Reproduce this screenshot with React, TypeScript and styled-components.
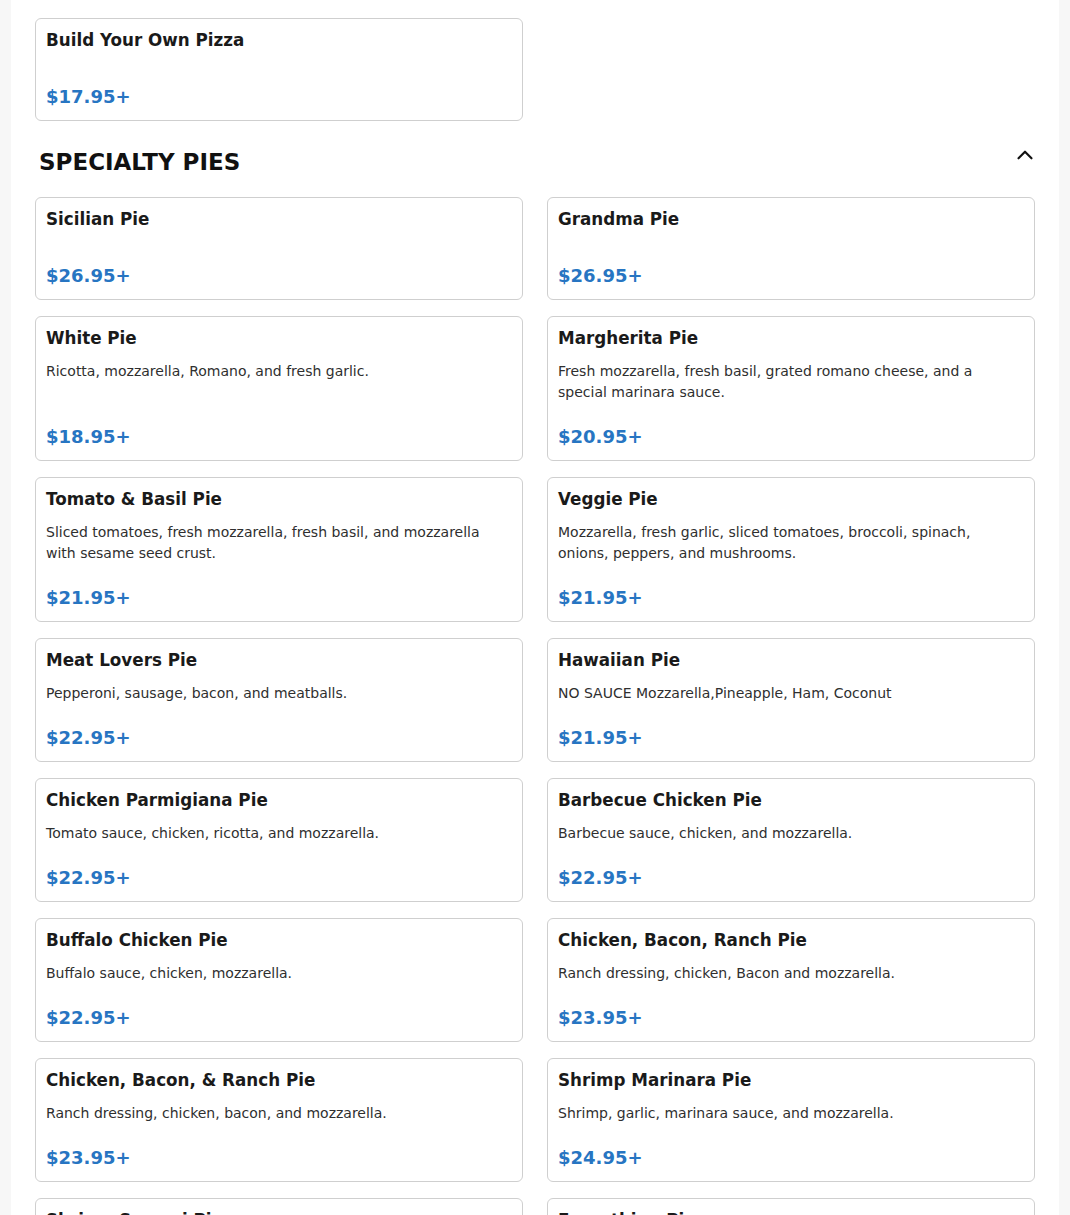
import React, { useState } from 'react';
import styled, { createGlobalStyle } from 'styled-components';
import { ChevronUp } from 'lucide-react';

type Pie = { name: string; description: string; price: string };

const GlobalStyle = createGlobalStyle`
  body {
    margin: 0;
    background: #f7f7f7;
    font-family: "DejaVu Sans", Verdana, sans-serif;
    color: #1d1d1d;
  }
`;

const Page = styled.main`
  max-width: 1048px;
  margin: 0 auto;
  background: #ffffff;
  padding: 18px 24px 40px;
  box-sizing: border-box;
  min-height: 1400px;
`;

const Grid = styled.div`
  display: grid;
  grid-template-columns: 1fr 1fr;
  column-gap: 24px;
  row-gap: 16px;
`;

const SectionHeader = styled.button`
  display: flex;
  justify-content: space-between;
  align-items: flex-start;
  width: 100%;
  margin: 24px 0 18px;
  padding: 0 0 0 4px;
  border: none;
  background: none;
  cursor: pointer;
  font-family: inherit;
  text-align: left;

  svg {
    margin-top: -3px;
    margin-right: -3px;
    color: #111;
  }
`;

const SectionTitle = styled.h2`
  margin: 0;
  font-size: 23px;
  line-height: 34px;
  font-weight: 700;
  color: #111;
`;

const Card = styled.div`
  display: flex;
  flex-direction: column;
  border: 1px solid #cfcfcf;
  border-radius: 6px;
  padding: 11px 10px 9px;
  background: #fff;
`;

const CardTitle = styled.h3`
  margin: 0;
  font-size: 16.75px;
  line-height: 20px;
  font-weight: 700;
  color: #1a1a1a;
`;

const Description = styled.p`
  margin: 13px 0 20px;
  font-size: 14px;
  line-height: 21px;
  color: #2f2f2f;
  max-width: 440px;
`;

const Price = styled.span`
  margin-top: auto;
  font-size: 18px;
  line-height: 28px;
  font-weight: 700;
  color: #2775c2;
`;

const specialtyPies: Pie[] = [
  { name: 'Sicilian Pie', description: '', price: '$26.95+' },
  { name: 'Grandma Pie', description: '', price: '$26.95+' },
  { name: 'White Pie', description: 'Ricotta, mozzarella, Romano, and fresh garlic.', price: '$18.95+' },
  { name: 'Margherita Pie', description: 'Fresh mozzarella, fresh basil, grated romano cheese, and a special marinara sauce.', price: '$20.95+' },
  { name: 'Tomato & Basil Pie', description: 'Sliced tomatoes, fresh mozzarella, fresh basil, and mozzarella with sesame seed crust.', price: '$21.95+' },
  { name: 'Veggie Pie', description: 'Mozzarella, fresh garlic, sliced tomatoes, broccoli, spinach, onions, peppers, and mushrooms.', price: '$21.95+' },
  { name: 'Meat Lovers Pie', description: 'Pepperoni, sausage, bacon, and meatballs.', price: '$22.95+' },
  { name: 'Hawaiian Pie', description: 'NO SAUCE Mozzarella,Pineapple, Ham, Coconut', price: '$21.95+' },
  { name: 'Chicken Parmigiana Pie', description: 'Tomato sauce, chicken, ricotta, and mozzarella.', price: '$22.95+' },
  { name: 'Barbecue Chicken Pie', description: 'Barbecue sauce, chicken, and mozzarella.', price: '$22.95+' },
  { name: 'Buffalo Chicken Pie', description: 'Buffalo sauce, chicken, mozzarella.', price: '$22.95+' },
  { name: 'Chicken, Bacon, Ranch Pie', description: 'Ranch dressing, chicken, Bacon and mozzarella.', price: '$23.95+' },
  { name: 'Chicken, Bacon, & Ranch Pie', description: 'Ranch dressing, chicken, bacon, and mozzarella.', price: '$23.95+' },
  { name: 'Shrimp Marinara Pie', description: 'Shrimp, garlic, marinara sauce, and mozzarella.', price: '$24.95+' },
  { name: 'Shrimp Scampi Pie', description: 'Shrimp, garlic, olive oil, and mozzarella.', price: '$24.95+' },
  { name: 'Everything Pie', description: 'Pepperoni, sausage, meatballs, peppers, onions, and mushrooms.', price: '$24.95+' },
];

function PieCard({ pie }: { pie: Pie }) {
  return (
    <Card>
      <CardTitle>{pie.name}</CardTitle>
      <Description>{pie.description}</Description>
      <Price>{pie.price}</Price>
    </Card>
  );
}

export default function App() {
  const [open, setOpen] = useState(true);

  return (
    <>
      <GlobalStyle />
      <Page>
        <Grid>
          <PieCard pie={{ name: 'Build Your Own Pizza', description: '', price: '$17.95+' }} />
        </Grid>
        <SectionHeader onClick={() => setOpen(!open)}>
          <SectionTitle>SPECIALTY PIES</SectionTitle>
          <ChevronUp size={26} strokeWidth={2} />
        </SectionHeader>
        {open && (
          <Grid>
            {specialtyPies.map((pie, index) => (
              <PieCard key={index} pie={pie} />
            ))}
          </Grid>
        )}
      </Page>
    </>
  );
}
